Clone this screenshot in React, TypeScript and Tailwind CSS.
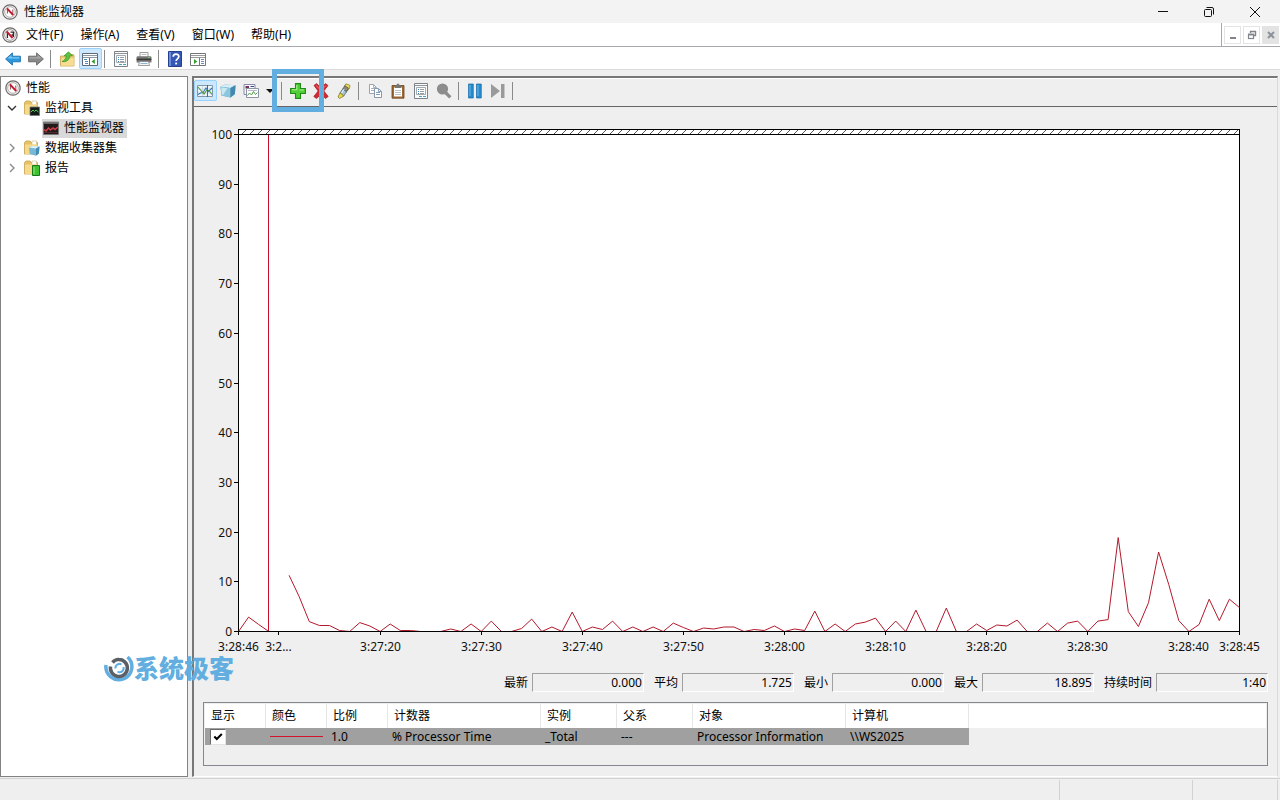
import React from "react";

const SAMPLES: (number | null)[] = [
  0, 2.9, 1.4, 0, null, 11.3, 7, 2, 1.2, 1.2, 0.2, 0, 1.8, 1.1, 0, 1.5, 0.2, 0.2, 0, 0,
  0, 0.5, 0, 1.5, 0, 2.1, 0, 0, 0.6, 2.5, 0, 0.9, 0, 3.9, 0, 0.9, 0.4, 2.1, 0, 0.9,
  0, 0.9, 0, 1.7, 0.8, 0, 0.7, 0.5, 0.9, 0.9, 0, 0.4, 0.2, 1.1, 0, 0.5, 0.2, 4.1, 0, 1.5,
  0, 1.5, 1.9, 2.7, 0, 2.1, 0, 4.3, 0, 0, 4.7, 0, 0, 1.5, 0.2, 1.3, 1.1, 2.3, 0, 0,
  1.7, 0, 1.7, 2.1, 0, 2.1, 2.4, 18.9, 4, 1, 5.8, 16, 9.5, 2.2, 0, 1.4, 6.5, 2.2, 6.5, 4.8,
];

const PLOT = { left: 44.5, right: 1045.5, top: 27.5, bottom: 524.5 };
const px = (i: number) => PLOT.left + (i * (PLOT.right - PLOT.left)) / 99;
const py = (v: number) => PLOT.bottom - (v * (PLOT.bottom - PLOT.top)) / 100;

const LINE_PATH = SAMPLES.map((v, i) => {
  if (v === null) return "";
  const start = i === 0 || SAMPLES[i - 1] === null;
  return `${start ? "M" : "L"}${px(i).toFixed(1)} ${py(v).toFixed(1)}`;
}).join(" ");

const LEVELS = [0, 10, 20, 30, 40, 50, 60, 70, 80, 90, 100];

const TIMES: { x: number; label: string }[] = [
  { x: 44.5, label: "3:28:46" },
  { x: 84.5, label: "3:2..." },
  { x: 186.5, label: "3:27:20" },
  { x: 287.5, label: "3:27:30" },
  { x: 388.5, label: "3:27:40" },
  { x: 489.5, label: "3:27:50" },
  { x: 590.5, label: "3:28:00" },
  { x: 691.5, label: "3:28:10" },
  { x: 792.5, label: "3:28:20" },
  { x: 893.5, label: "3:28:30" },
  { x: 994.5, label: "3:28:40" },
  { x: 1045.5, label: "3:28:45" },
];

function Chart() {
  return (
    <svg viewBox="0 0 1083 561" className="block h-auto w-full" role="img" aria-label="% Processor Time">
      <defs>
        <pattern id="hatch" width="8" height="5" x="46" y="23" patternUnits="userSpaceOnUse">
          <path d="M1 5 L6 0" stroke="#555" strokeWidth="1" fill="none" />
        </pattern>
      </defs>
      <rect x="44.5" y="22.5" width="1001" height="502" fill="#fff" stroke="#000" shapeRendering="crispEdges" />
      <rect x="45" y="23" width="1000" height="4" fill="url(#hatch)" />
      <path d="M44 27.5H1046" stroke="#000" shapeRendering="crispEdges" />
      <path d={LINE_PATH} fill="none" stroke="#b3192b" strokeWidth="1" />
      <path d="M74.5 28V524" stroke="#c8102e" shapeRendering="crispEdges" />
      <path d="M44 524.5H1046" stroke="#000" shapeRendering="crispEdges" />
      <g stroke="#000" shapeRendering="crispEdges">
        {LEVELS.map((v) => (
          <path key={v} d={`M40 ${Math.floor(py(v)) + 0.5}H44`} />
        ))}
        {TIMES.map((t) => (
          <path key={t.label} d={`M${t.x} 524V528`} />
        ))}
      </g>
      <g fontSize="12" fill="#111">
        {LEVELS.map((v) => (
          <text key={v} x="38" y={Math.floor(py(v)) + 5} textAnchor="end">
            {v}
          </text>
        ))}
        {TIMES.map((t) => (
          <text key={t.label} x={t.x} y="544" textAnchor="middle">
            {t.label}
          </text>
        ))}
      </g>
    </svg>
  );
}

function Svg({ children }: { children: React.ReactNode }) {
  return (
    <svg viewBox="0 0 16 16" className="block size-4 shrink-0" fill="none" aria-hidden="true">
      {children}
    </svg>
  );
}

const GaugeIcon = () => (
  <Svg>
    <circle cx="8" cy="8" r="7.2" fill="#f4f2f2" stroke="#6d6868" strokeWidth="1.2" />
    <circle cx="8" cy="8" r="5.3" fill="#fff" stroke="#a39c9c" strokeWidth=".8" />
    <path d="M5.4 9.500V5.200M10.800 5.500v5" stroke="#8a4a50" strokeWidth="1" />
    <path d="M5 4.400 11.200 11.200" stroke="#c3182c" strokeWidth="2" />
  </Svg>
);
const GaugeDarkIcon = () => (
  <Svg>
    <circle cx="8" cy="8" r="7.2" fill="#eee" stroke="#6d6868" strokeWidth="1.2" />
    <circle cx="8" cy="8" r="5.3" fill="#fff" stroke="#908888" strokeWidth=".8" />
    <path d="M5.4 11V5.600M8.500 5.200h3.300M9.500 8h2.300M11.400 5v5" stroke="#2c2c2c" strokeWidth="1.3" />
    <path d="M4.600 4.400 10.600 11" stroke="#c3182c" strokeWidth="2" />
  </Svg>
);
const BackIcon = () => (
  <Svg>
    <path d="M.6 8 7.4 1.9v3.3h8v5.6h-8v3.3Z" fill="#2b97dd" stroke="#1c6fb0" strokeWidth=".9" />
    <path d="M2.3 7.6 6.4 4v2.2h8v1.4Z" fill="#7cc9f5" />
  </Svg>
);
const ForwardIcon = () => (
  <Svg>
    <path d="M15.4 8 8.6 1.9v3.3h-8v5.6h8v3.3Z" fill="#898989" stroke="#666" strokeWidth=".9" />
    <path d="M13.7 7.6 9.6 4v2.2h-8v1.4Z" fill="#aaa" />
  </Svg>
);
const FolderUpIcon = () => (
  <Svg>
    <path d="M1.5 5h5l1-1.500H14a1 1 0 0 1 1 1V15H1.500Z" fill="#ecca75" stroke="#c9a24d" strokeWidth=".8" />
    <path d="M1.800 14.800 2.600 7h12.200v7.800Z" fill="#f7dd92" />
    <path d="M3 10.500C5.500 9.500 7 7.500 7.300 4.800H5L9.500.800l4 4h-2.400C10.800 8.500 7.500 11.500 3 10.500Z" fill="#5cc23f" stroke="#2f8a1e" strokeWidth=".6" />
  </Svg>
);
const TreePaneIcon = () => (
  <Svg>
    <path d="M.5 2.5h15v12H.5Z" fill="#fff" stroke="#5f6a75" />
    <path d="M1 4.5h14M1 6.5h14" stroke="#8d98a3" />
    <path d="M7.5 7v7" stroke="#5f6a75" />
    <path d="M2 8.5h3M3 10.5h3M3 12.5h3" stroke="#5788b8" />
    <path d="M12.8 8v5L9.5 10.5Z" fill="#2e9d2e" />
  </Svg>
);
const ActionPaneIcon = () => (
  <Svg>
    <path d="M.5 2.5h15v12H.5Z" fill="#fff" stroke="#72777c" />
    <path d="M1 4.5h14M1 6.5h14" stroke="#999" />
    <path d="M9.5 7v7" stroke="#72777c" />
    <path d="M11 8.5h3M11 10.5h3M11 12.5h3" stroke="#6b8cae" />
    <path d="M4 8v5l3.3-2.5Z" fill="#2e9d2e" />
  </Svg>
);
const PropertiesIcon = () => (
  <Svg>
    <path d="M1.5.5h13v15h-13Z" fill="#fbfbfb" stroke="#7c8288" />
    <path d="M2 2.5h12" stroke="#8d949b" />
    <path d="M3.5 4.5h9v7h-9Z" fill="#fff" stroke="#a3abb2" />
    <path d="M5 6.5h1M5 8.5h1M5 10.5h1" stroke="#3c84bd" />
    <path d="M7 6.5h4M7 8.5h4M7 10.5h4" stroke="#979da3" />
    <path d="M6 13.5h3M10 13.5h3" stroke="#46a3c4" />
  </Svg>
);
const PrinterIcon = () => (
  <Svg>
    <path d="M4 6V1.5h8V6" fill="#fff" stroke="#8e8e8e" strokeWidth=".9" />
    <path d="M5.5 3.5h5" stroke="#bbb" />
    <path d="M.6 6.2Q.6 5.2 1.6 5.2h12.800q1 0 1 1v5.300H.6Z" fill="#777" />
    <path d="M.6 7.600h14.800v1.600H.6Z" fill="#3a3a3a" />
    <path d="M12 6.500h2" stroke="#6ac84b" />
    <path d="M3.500 10.500h9l1 4h-11Z" fill="#f5f5f5" stroke="#888" strokeWidth=".8" />
    <path d="M4.500 12.500h7" stroke="#8bb6d8" />
  </Svg>
);
const HelpIcon = () => (
  <Svg>
    <path d="M1.5.5h13v15h-13Z" fill="#3658b5" stroke="#24408f" />
    <path d="M2 1h2v14H2Z" fill="#6f8bdb" />
    <path d="M6.2 5.8C6.2 2.2 11.8 2.4 11.8 5.5c0 2.3-2.7 2.3-2.7 4.600" stroke="#fff" strokeWidth="1.7" />
    <path d="M8.2 11.6h1.9v1.800H8.200Z" fill="#fff" />
  </Svg>
);
const GraphIcon = () => (
  <Svg>
    <path d="M.5 2.500h15v11H.5Z" fill="#eef5fa" stroke="#7f98aa" />
    <path d="M1 6h14M1 10h14M5.500 3v10" stroke="#c6d4de" strokeWidth=".8" />
    <path d="m1 11.500 2.500-1.500 2.500-.5L9 5l2.500 3.500L15 5" stroke="#3578b5" strokeWidth="1.100" />
    <path d="m1 4 3 3.500L7 11l2.500-3.500 2.500 0 3 4" stroke="#4f9a38" strokeWidth="1.100" />
    <path d="M10.500 2v12" stroke="#d0342c" />
  </Svg>
);
const CubeIcon = () => (
  <Svg>
    <path d="M.5 3.800 5 1.500l10.500.8-.6 8.700-4.400 3.500L1.500 12.500Z" fill="#5ba3c4" />
    <path d="M.5 3.800 5 1.500l10.500.8-5 2.700Z" fill="#d6eef7" />
    <path d="m.5 3.800 10 1.200v9.500l-9-2Z" fill="#8bc6dd" />
    <path d="m1.200 4.500 6.300.800L3 12l-1-.2Z" fill="#c8e8f3" />
    <path d="m10.500 5 5-2.700-.6 8.700-4.400 3.500Z" fill="#4389af" />
  </Svg>
);
const ReportIcon = () => (
  <Svg>
    <path d="M1 1.500h11v10H1Z" fill="#f6f6fb" stroke="#8a88a8" />
    <path d="M2.500 3h3.500v2.500H2.500Z" fill="#73335a" />
    <path d="M7.500 3.500h3.500" stroke="#3d4a8c" />
    <path d="M3.500 5.500h12v9h-12Z" fill="#fff" stroke="#8c93a5" />
    <path d="m4.500 12.500 2-2.500 2 2 2-3.500 2 3 2-2" stroke="#4b9a45" />
    <path d="M5 7.500h9" stroke="#b4b9d0" />
  </Svg>
);
const PlusIcon = () => (
  <Svg>
    <path d="M5.500.6h5v4.900h4.900v5h-4.900v4.900h-5v-4.900H.6v-5h4.900Z" fill="#4fce35" stroke="#218a18" strokeWidth="1.100" />
    <path d="M6.800 2v4.800H2M9.500 7h4.300" stroke="#a9f090" strokeWidth="1.100" />
  </Svg>
);
const DeleteIcon = () => (
  <Svg>
    <path d="M1 2.500 3.500.6 8 4.800 12.500.6 15 2.500 10.800 8l4.400 5.500-2.700 2L8 11.200l-4.500 4.300-2.700-2L5.200 8Z" fill="#d4282f" stroke="#a3161e" strokeWidth=".7" />
    <path d="m3 2.500 4.500 4.300M13 2.500 9 6.500" stroke="#f0797a" />
  </Svg>
);
const HighlighterIcon = () => (
  <Svg>
    <path d="M8.700 3 9.900.8l4 1.500-.3 3-2.200 2.500Z" fill="#f0dd52" stroke="#7d7430" strokeWidth=".7" />
    <path d="m6.800 6.200 1.900-3.500 3.700 2.300-2 4Z" fill="#8a8a80" stroke="#444" strokeWidth=".7" />
    <path d="m4 10 2.800-4.200 3.600 3L7.800 13Z" fill="#a9c4ce" stroke="#3c5660" strokeWidth=".7" />
    <path d="m4 9.800 3.800 3.200-4.300 2.500-1.500-1.500Z" fill="#ecdb47" stroke="#7d7430" strokeWidth=".8" />
    <path d="m5.500 10 2.700-4" stroke="#e9fbff" />
  </Svg>
);
const CopyIcon = () => (
  <Svg>
    <path d="M2.500 1.500h4l3 3v6h-7Z" fill="#fff" stroke="#9aa3ad" />
    <path d="M4 5.500h4M4 7.500h4M6.500 2v2.500h3" stroke="#a6b4c4" />
    <path d="M7.500 5.500h4l3 3v6h-7Z" fill="#fff" stroke="#8b98a8" />
    <path d="M9 9.500h4M9 11.500h4M11.500 6v2.500h3" stroke="#7d9ebd" />
  </Svg>
);
const PasteIcon = () => (
  <Svg>
    <path d="M2 2.500h12v12.700H2Z" fill="#a06a35" stroke="#70431b" strokeWidth=".8" />
    <path d="M4 4.500h8v9H4Z" fill="#fff" />
    <path d="M5 2.500h1.500l.5-1.700h2l.5 1.700H11V5H5Z" fill="#777" />
    <path d="M5 7.500h6M5 9.500h6M5 11.500h6" stroke="#b9c1c9" />
  </Svg>
);
const MagnifierIcon = () => (
  <Svg>
    <circle cx="6.500" cy="6" r="5.600" fill="#8c8c8c" />
    <path d="m9.500 9.500 4.800 4.800" stroke="#8c8c8c" strokeWidth="3.200" />
  </Svg>
);
const PauseIcon = () => (
  <Svg>
    <path d="M1.500 1h4.800v14H1.500ZM9.500 1h4.800v14H9.500Z" fill="#258bd0" stroke="#176aa8" strokeWidth=".7" />
    <path d="M3 2v11M11 2v11" stroke="#6dbbea" />
  </Svg>
);
const StepIcon = () => (
  <Svg>
    <path d="M1 1v14l9-7Z" fill="#9a9a9a" />
    <path d="M11 1h3.500v14H11Z" fill="#9a9a9a" />
  </Svg>
);

const FolderBase = () => (
  <>
    <path d="M.5 2.500 2 1h4l1 1.500h6.500V14H.5Z" fill="#e6c266" stroke="#c9a24d" strokeWidth=".8" />
    <path d="M8 1h4.500v4H8Z" fill="#fff" stroke="#cdbb8b" strokeWidth=".6" />
    <path d="M1 4.500h12.300V14H1Z" fill="#f6da8c" />
  </>
);
const FolderMonitorIcon = () => (
  <Svg>
    <FolderBase />
    <path d="M6 7h9.500v8.500H6Z" fill="#111d16" stroke="#777" strokeWidth=".8" />
    <path d="m7 12 2-2 1.500 1.500L12 10l2.500 2" stroke="#50c954" />
  </Svg>
);
const FolderCubeIcon = () => (
  <Svg>
    <FolderBase />
    <path d="M5 7.500 8 6l7.500.6-.6 7-3 2.200L5.600 14Z" fill="#78b8d6" />
    <path d="m5 7.500 3-1.500 7.500.6L12 8.400Z" fill="#dff2fa" />
    <path d="m12 8.400 3.500-1.800-.6 7-2.900 2.200Z" fill="#438eb8" />
  </Svg>
);
const FolderReportIcon = () => (
  <Svg>
    <FolderBase />
    <path d="M8.500 5.500h7v10h-7Z" fill="#3fc230" stroke="#187a16" />
    <path d="M10 7v7" stroke="#92ea7e" />
  </Svg>
);
const MonitorIcon = () => (
  <Svg>
    <path d="M.5 2h15v12.500H.5Z" fill="#241a1c" stroke="#777" strokeWidth=".8" />
    <path d="M1 3h14" stroke="#999" strokeWidth="1.200" />
    <path d="m1 9.500 2 1.500 2.500-3 2 2 2.500-2 2 1.500L15 7" stroke="#d23f48" strokeWidth="1.500" />
    <path d="M1 12.500h14" stroke="#633" strokeWidth=".7" />
  </Svg>
);

function ToolButton({ label, active, children }: { label: string; active?: boolean; children: React.ReactNode }) {
  return (
    <button
      type="button"
      aria-label={label}
      className={
        active
          ? "flex h-[21px] w-[23px] items-center rounded-xs border border-[#99d1ff] bg-[#cce8ff] pl-[2px]"
          : "flex h-[21px] w-[23px] items-center pl-[3px]"
      }
    >
      {children}
    </button>
  );
}

const Separator = () => <span className="mr-[5px] ml-[2px] h-[18px] border-l border-[#8a8a8a]" />;

const Chevron = ({ open }: { open?: boolean }) => (
  <svg viewBox="0 0 10 10" className="block size-[10px] shrink-0" fill="none" aria-hidden="true">
    <path d={open ? "M1 3 5 7 9 3" : "M3 1 7 5 3 9"} stroke={open ? "#333" : "#8c8c8c"} strokeWidth="1.400" />
  </svg>
);

function TreeRow({ label, icon, open }: { label: string; icon: React.ReactNode; open?: boolean }) {
  return (
    <button type="button" aria-expanded={!!open} className="flex h-5 w-full items-center pl-[6px]">
      <Chevron open={open} />
      <span className="ml-[7px]">{icon}</span>
      <span className="ml-[5px]">{label}</span>
    </button>
  );
}

const STATS = [
  { label: "最新", value: "0.000" },
  { label: "平均", value: "1.725" },
  { label: "最小", value: "0.000" },
  { label: "最大", value: "18.895" },
  { label: "持续时间", value: "1:40" },
];

const HEADERS = ["显示", "颜色", "比例", "计数器", "实例", "父系", "对象", "计算机"];

export default function App() {
  return (
    <div className="flex min-h-screen flex-col bg-[#efefef] font-['Noto_Sans','Noto_Sans_CJK_SC',sans-serif] text-[12px] leading-4 text-black">
      <header className="flex h-[23px] items-center bg-[#f3f3f3] pr-[2px] pl-[2px]">
        <GaugeIcon />
        <h1 className="ml-[6px] flex-1">性能监视器</h1>
        <button type="button" aria-label="最小化" className="flex h-5 w-[46px] items-center justify-center">
          <svg viewBox="0 0 12 12" className="size-3" aria-hidden="true">
            <path d="M1 5.500h10" stroke="#111" />
          </svg>
        </button>
        <button type="button" aria-label="还原" className="flex h-5 w-[46px] items-center justify-center">
          <svg viewBox="0 0 12 12" className="size-3" fill="none" stroke="#111" aria-hidden="true">
            <rect x="1.500" y="3.500" width="7" height="7" rx="1" />
            <path d="M3.500 1.500H9a1.500 1.500 0 0 1 1.500 1.500v5.500" />
          </svg>
        </button>
        <button type="button" aria-label="关闭" className="flex h-5 w-[46px] items-center justify-center">
          <svg viewBox="0 0 12 12" className="size-3" stroke="#111" aria-hidden="true">
            <path d="m1 1 10 10M11 1 1 11" />
          </svg>
        </button>
      </header>

      <nav className="flex h-6 border-b border-[#a5a8ad] bg-white pl-[2px]">
        <div className="flex flex-1 items-center">
          <GaugeDarkIcon />
          <div className="ml-2 flex gap-[17px]">
            {["文件(F)", "操作(A)", "查看(V)", "窗口(W)", "帮助(H)"].map((m) => (
              <button key={m} type="button">
                {m}
              </button>
            ))}
          </div>
        </div>
        <div className="flex items-center gap-[2px] border-l border-[#a5a8ad] pr-px pl-[2px]">
          <button type="button" aria-label="最小化子窗口" className="flex h-[18px] w-[17px] items-center justify-center border border-[#e4e4e4]">
            <svg viewBox="0 0 10 10" className="size-[10px]" aria-hidden="true">
              <path d="M2 8h6" stroke="#7f858b" strokeWidth="2" />
            </svg>
          </button>
          <button type="button" aria-label="还原子窗口" className="flex h-[18px] w-[17px] items-center justify-center border border-[#e4e4e4]">
            <svg viewBox="0 0 10 10" className="size-[10px]" fill="none" stroke="#7f858b" aria-hidden="true">
              <path d="M3 1.500h6M8.500 1v4.500H7M3.500 1v2" strokeWidth="1.400" />
              <rect x="1.500" y="4.500" width="5" height="4" strokeWidth="1.200" />
              <path d="M1 4.500h6" strokeWidth="1.800" />
            </svg>
          </button>
          <button type="button" aria-label="关闭子窗口" className="flex h-[18px] w-[17px] items-center justify-center bg-[#e3e3e4]">
            <svg viewBox="0 0 10 10" className="size-[10px]" stroke="#8b9299" strokeWidth="2" aria-hidden="true">
              <path d="m2 2 6 6M8 2 2 8" />
            </svg>
          </button>
        </div>
      </nav>

      <div className="flex h-[23px] items-center border-b border-[#dcdcdc] bg-white pt-px pl-[2px]">
        <ToolButton label="后退"><BackIcon /></ToolButton>
        <ToolButton label="前进"><ForwardIcon /></ToolButton>
        <Separator />
        <ToolButton label="上一级"><FolderUpIcon /></ToolButton>
        <ToolButton label="显示控制台树" active><TreePaneIcon /></ToolButton>
        <Separator />
        <ToolButton label="属性"><PropertiesIcon /></ToolButton>
        <ToolButton label="打印"><PrinterIcon /></ToolButton>
        <Separator />
        <ToolButton label="帮助"><HelpIcon /></ToolButton>
        <ToolButton label="显示操作窗格"><ActionPaneIcon /></ToolButton>
      </div>

      <main className="relative flex flex-1 gap-[4px] pt-[6px] pr-[2px]">
        <aside className="w-[188px] shrink-0 border border-[#828282] bg-white pt-px" aria-label="控制台树">
          <div className="flex h-5 items-center pl-1">
            <GaugeIcon />
            <span className="ml-[5px]">性能</span>
          </div>
          <TreeRow label="监视工具" icon={<FolderMonitorIcon />} open />
          <div className="flex h-5 items-center pl-[41px]">
            <button type="button" className="flex h-[19px] items-center bg-[#d9d9d9] pr-[3px] pl-px">
              <MonitorIcon />
              <span className="ml-[5px]">性能监视器</span>
            </button>
          </div>
          <TreeRow label="数据收集器集" icon={<FolderCubeIcon />} />
          <TreeRow label="报告" icon={<FolderReportIcon />} />
        </aside>

        <section className="flex min-w-0 flex-1 flex-col border-t-2 border-r border-b border-l-2 border-t-[#777] border-r-[#dadada] border-b-white border-l-[#777]">
          <div className="relative flex h-[29px] items-center border-t border-b border-t-white border-b-[#666] pb-[4px]">
            <ToolButton label="查看当前活动" active><GraphIcon /></ToolButton>
            <ToolButton label="查看日志数据"><CubeIcon /></ToolButton>
            <ToolButton label="更改图形类型"><ReportIcon /></ToolButton>
            <button type="button" aria-label="图形类型列表" className="flex h-[21px] w-[14px] items-center justify-center">
              <svg viewBox="0 0 8 4" className="h-1 w-2" aria-hidden="true">
                <path d="M0 0h8L4 4Z" fill="#111" />
              </svg>
            </button>
            <span className="mr-[5px] ml-[4px] h-[18px] border-l border-[#8a8a8a]" />
            <ToolButton label="添加"><PlusIcon /></ToolButton>
            <ToolButton label="删除"><DeleteIcon /></ToolButton>
            <ToolButton label="突出显示"><HighlighterIcon /></ToolButton>
            <Separator />
            <ToolButton label="复制属性"><CopyIcon /></ToolButton>
            <ToolButton label="粘贴计数器列表"><PasteIcon /></ToolButton>
            <ToolButton label="属性"><PropertiesIcon /></ToolButton>
            <ToolButton label="缩放"><MagnifierIcon /></ToolButton>
            <Separator />
            <ToolButton label="冻结显示"><PauseIcon /></ToolButton>
            <ToolButton label="更新数据"><StepIcon /></ToolButton>
            <Separator />
            <div className="pointer-events-none absolute -top-[10px] left-[78px] h-[43px] w-[52px] border-[5px] border-[#62aee0]" />
          </div>

          <Chart />

          <div className="flex justify-end gap-[10px] pt-[5px] pr-[9px]">
            {STATS.map((s) => (
              <div key={s.label} className="flex items-center gap-1">
                <span>{s.label}</span>
                <output aria-label={s.label} className="h-[19px] w-[112px] border border-t-[#a0a0a0] border-r-white border-b-white border-l-[#a0a0a0] pr-px text-right leading-[18px]">
                  {s.value}
                </output>
              </div>
            ))}
          </div>

          <div className="mx-[9px] my-[10px] min-h-[64px] flex-1 border border-[#828790] p-px">
            <table className="w-full table-fixed border-separate border-spacing-0 text-left">
              <colgroup>
                <col className="w-[61px]" />
                <col className="w-[61px]" />
                <col className="w-[61px]" />
                <col className="w-[153px]" />
                <col className="w-[76px]" />
                <col className="w-[76px]" />
                <col className="w-[153px]" />
                <col className="w-[123px]" />
                <col />
              </colgroup>
              <thead>
                <tr className="h-6 bg-white">
                  {HEADERS.map((h) => (
                    <th key={h} scope="col" className="border-r border-[#e5e5e5] p-0 pl-[6px] font-normal">
                      {h}
                    </th>
                  ))}
                  <td className="p-0" />
                </tr>
              </thead>
              <tbody>
                <tr className="h-[17px]">
                  <td className="bg-[#a0a0a0] p-0 pl-[5px]">
                    <label className="flex size-4 items-center justify-center border border-t-[#696969] border-r-[#e3e3e3] border-b-[#e3e3e3] border-l-[#696969] bg-white">
                      <input type="checkbox" defaultChecked aria-label="显示" className="peer sr-only" />
                      <svg viewBox="0 0 10 10" className="hidden size-[10px] peer-checked:block" fill="none" aria-hidden="true">
                        <path d="M1.300 4.500 3.800 7 8.800 2" stroke="#000" strokeWidth="2" />
                      </svg>
                    </label>
                  </td>
                  <td className="bg-[#a0a0a0] p-0 pl-1">
                    <div className="h-px w-[53px] bg-[#d0142c]" />
                  </td>
                  <td className="bg-[#a0a0a0] p-0 pl-1">1.0</td>
                  <td className="bg-[#a0a0a0] p-0 pl-1">% Processor Time</td>
                  <td className="bg-[#a0a0a0] p-0 pl-1">_Total</td>
                  <td className="bg-[#a0a0a0] p-0 pl-1">---</td>
                  <td className="bg-[#a0a0a0] p-0 pl-1">Processor Information</td>
                  <td className="bg-[#a0a0a0] p-0 pl-1">{"\\\\WS2025"}</td>
                  <td className="p-0" />
                </tr>
              </tbody>
            </table>
          </div>
        </section>

        <div className="pointer-events-none absolute bottom-[94px] left-[104px] flex items-center text-[#62aee0]">
          <svg viewBox="0 0 30 30" className="size-[30px]" fill="none" aria-hidden="true">
            <path d="M2 12A13 13 0 1 0 23.500 4" stroke="#62aee0" strokeWidth="3.500" />
            <path d="M6.500 13.500A8.500 8.500 0 1 0 15 6.500Q11.500 6 8.500 9.500" stroke="#5b5f66" strokeWidth="3.500" />
            <path d="M11.500 15.500a4 4 0 0 1 6-4M19.500 14a4 4 0 0 1-6 4.500" stroke="#62aee0" strokeWidth="2" />
          </svg>
          <span className="text-[25px] leading-[30px] font-black">系统极客</span>
        </div>
      </main>

      <footer className="mt-px flex h-[22px] justify-end border-t border-[#d2d2d2] pt-px pr-[2px]">
        <div className="w-[133px] border-l border-[#d2d2d2]" />
        <div className="w-[86px] border-r border-l border-[#d2d2d2]" />
      </footer>
    </div>
  );
}
